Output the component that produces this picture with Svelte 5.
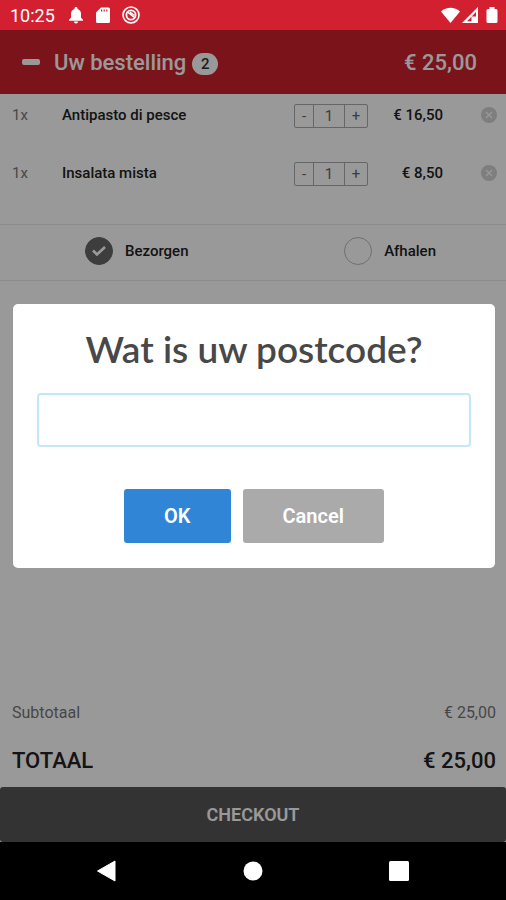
<script>
  let items = $state([
    { name: 'Antipasto di pesce', qty: 1, price: '€ 16,50' },
    { name: 'Insalata mista', qty: 1, price: '€ 8,50' }
  ]);
  let method = $state('Bezorgen');
  let postcode = $state('');
</script>

<div class="screen">
  <div class="status">
    <span class="clock">10:25</span>
    <svg width="16" height="18" viewBox="0 0 16 18" fill="#fff" aria-hidden="true">
      <path d="M8 1c.9 0 1.500.6 1.500 1.400v.6c2.200.6 3.500 2.400 3.500 4.800v4l2 2v1H1v-1l2-2v-4C3 5.400 4.300 3.600 6.500 3v-.6C6.500 1.600 7.100 1 8 1zM6 15.500h4a2 2 0 0 1-4 0z" />
    </svg>
    <svg width="14" height="18" viewBox="0 0 14 18" fill="#fff" aria-hidden="true">
      <path fill-rule="evenodd" d="M5 1.500h7.500A1.500 1.500 0 0 1 14 3v12.500a1.500 1.500 0 0 1-1.500 1.500h-11A1.500 1.500 0 0 1 0 15.500V6.500zM5 3.500v2h1.200v-2zm2.600 0v2h1.200v-2zm2.600 0v2h1.200v-2z" />
    </svg>
    <svg width="18" height="18" viewBox="0 0 18 18" fill="none" stroke="#fff" aria-hidden="true">
      <circle cx="9" cy="9" r="8" stroke-width="1.600" />
      <circle cx="9" cy="9" r="4.600" stroke-width="1.800" />
      <path d="M5.500 6l7.500 6M8 6.200l4.500 3.300" stroke-width="1.500" />
    </svg>
    <span class="grow"></span>
    <svg width="19" height="18" viewBox="0 0 19 18" fill="#fff" aria-hidden="true">
      <path d="M0 5.500C5.500.6 13.500.6 19 5.500L9.500 17z" />
    </svg>
    <svg width="16" height="18" viewBox="0 0 16 18" fill="#fff" aria-hidden="true">
      <path fill-rule="evenodd" d="M16 1v16H0zM14 6L5 15.200h4.500v-4.700H14z" />
      <path d="M10.800 12.200h3.200v3h-3.200z" />
    </svg>
    <svg class="battery" width="12" height="18" viewBox="0 0 12 18" fill="#fff" aria-hidden="true">
      <path d="M3.500 1h5v2H10a1.500 1.500 0 0 1 1.500 1.500v11A1.500 1.500 0 0 1 10 17H2A1.500 1.500 0 0 1 .5 15.500v-11A1.500 1.500 0 0 1 2 3h1.500z" />
    </svg>
  </div>

  <div class="app">
    <header>
      <button class="collapse" aria-label="Inklappen"><span></span></button>
      <h1>Uw bestelling</h1>
      <span class="count">2</span>
      <span class="grow"></span>
      <strong>€ 25,00</strong>
    </header>

    <ul>
      {#each items as item}
        <li>
          <span class="times">{item.qty}x</span>
          <span class="name">{item.name}</span>
          <div class="stepper">
            <button aria-label="Minder {item.name}">-</button>
            <output>{item.qty}</output>
            <button aria-label="Meer {item.name}">+</button>
          </div>
          <span class="price">{item.price}</span>
          <button class="remove" aria-label="Verwijder {item.name}">
            <svg width="16" height="16" viewBox="0 0 16 16" aria-hidden="true">
              <circle cx="8" cy="8" r="8" fill="#d2d2d2" />
              <path d="M5 5l6 6M11 5l-6 6" stroke="#fff" stroke-width="1.200" />
            </svg>
          </button>
        </li>
      {/each}
    </ul>

    <div class="methods">
      {#each ['Bezorgen', 'Afhalen'] as option}
        <label>
          <span class="radio">
            <input type="radio" name="method" value={option} bind:group={method} />
            {#if method === option}
              <svg width="28" height="28" viewBox="0 0 28 28" fill="none" aria-hidden="true">
                <path d="M8 13.500l4 4 8-7.500" stroke="#fff" stroke-width="2.600" />
              </svg>
            {/if}
          </span>
          {option}
        </label>
      {/each}
    </div>

    <dl>
      <div class="sub"><dt>Subtotaal</dt><dd>€ 25,00</dd></div>
      <div class="total"><dt>TOTAAL</dt><dd>€ 25,00</dd></div>
    </dl>
    <button class="checkout">CHECKOUT</button>

    <div class="overlay">
      <form class="dialog" role="dialog" aria-labelledby="question" onsubmit={(e) => e.preventDefault()}>
        <label id="question" for="postcode">Wat is uw postcode?</label>
        <input id="postcode" type="text" bind:value={postcode} />
        <div class="actions">
          <button class="ok" type="submit">OK</button>
          <button class="cancel" type="button">Cancel</button>
        </div>
      </form>
    </div>
  </div>

  <nav>
    <button aria-label="Terug">
      <svg width="22" height="22" viewBox="0 0 22 22" fill="#fff" aria-hidden="true"><path d="M19 1v20L1.500 11z" stroke="#fff" stroke-linejoin="round" /></svg>
    </button>
    <button aria-label="Start">
      <svg width="22" height="22" viewBox="0 0 22 22" fill="#fff" aria-hidden="true"><circle cx="11" cy="11" r="9.500" /></svg>
    </button>
    <button aria-label="Overzicht">
      <svg width="22" height="22" viewBox="0 0 22 22" fill="#fff" aria-hidden="true"><rect x="1" y="1" width="20" height="20" rx="1.500" /></svg>
    </button>
  </nav>
</div>

<style>
  :global(body) {
    margin: 0;
  }
  .screen {
    min-height: 100vh;
    display: flex;
    flex-direction: column;
    background: #000;
    font-family: Roboto, "Liberation Sans", sans-serif;
  }
  .screen * {
    box-sizing: border-box;
  }
  button {
    font: inherit;
    color: inherit;
    background: none;
    border: 0;
    padding: 0;
    cursor: pointer;
  }
  .grow {
    flex: 1;
  }
  .status {
    height: 30px;
    padding: 0 8px 0 10px;
    display: flex;
    align-items: center;
    background: #d32030;
    color: #fff;
  }
  .status svg + svg {
    margin-left: 12px;
  }
  .status .grow ~ svg + svg {
    margin-left: 2px;
  }
  .status .grow ~ .battery {
    margin-left: 8px;
  }
  .clock {
    font-size: 18px;
    margin-right: 13px;
  }
  .app {
    position: relative;
    flex: 1;
    display: flex;
    flex-direction: column;
    background: #fff;
    color: #222;
  }
  header {
    height: 64px;
    padding: 0 29px 0 22px;
    display: flex;
    align-items: center;
    background: #cd202d;
    color: #fff;
    font-size: 22px;
    font-weight: 500;
  }
  .collapse {
    padding: 8px 0;
    margin-right: 14px;
  }
  .collapse span {
    display: block;
    width: 18px;
    height: 6px;
    border-radius: 2px;
    background: #fff;
  }
  h1 {
    margin: 0;
    font: inherit;
  }
  header strong {
    font-weight: 500;
  }
  .count {
    width: 26px;
    height: 22px;
    margin: 4px 0 0 6px;
    border-radius: 11px;
    background: #fff;
    color: #333;
    font-size: 15px;
    line-height: 22px;
    text-align: center;
  }
  ul {
    list-style: none;
    margin: 0;
    padding: 0 9px 0 12px;
  }
  li {
    height: 58px;
    padding-top: 8px;
    display: flex;
    align-items: flex-start;
    font-size: 15px;
    line-height: 26px;
    font-weight: 500;
  }
  .times {
    width: 50px;
    color: #777;
    font-weight: 400;
  }
  .name {
    flex: 1;
  }
  .stepper {
    margin-top: 2px;
    display: flex;
    border: 1px solid #aaa;
    border-radius: 2px;
    color: #666;
    line-height: 22px;
    text-align: center;
    font-weight: 400;
  }
  .stepper button {
    width: 20px;
  }
  .stepper button:first-child {
    width: 18px;
  }
  .stepper button:last-child {
    width: 22px;
  }
  .stepper output {
    width: 32px;
    border: solid #aaa;
    border-width: 0 1px;
  }
  .price {
    width: 75px;
    text-align: right;
  }
  .remove {
    height: 26px;
    margin-left: 38px;
    display: flex;
    align-items: center;
  }
  .methods {
    margin-top: 14px;
    height: 57px;
    padding: 0 70px 3px 85px;
    display: flex;
    justify-content: space-between;
    border: solid #eaeaea;
    border-width: 1px 0;
    font-size: 15px;
    font-weight: 500;
  }
  .methods label {
    display: flex;
    align-items: center;
    gap: 12px;
  }
  .radio {
    position: relative;
    width: 28px;
    height: 28px;
  }
  .radio input {
    appearance: none;
    display: block;
    width: 28px;
    height: 28px;
    margin: 0;
    border: 1px solid #bbb;
    border-radius: 50%;
  }
  .radio input:checked {
    border-color: #666;
    background: #666;
  }
  .radio svg {
    position: absolute;
    inset: 0;
    pointer-events: none;
  }
  dl {
    margin: auto 0 0;
    padding: 0 10px 11px 12px;
  }
  dl div {
    display: flex;
    justify-content: space-between;
    align-items: center;
  }
  dd {
    margin: 0;
  }
  .sub {
    height: 32px;
    margin-bottom: 16px;
    font-size: 16px;
    color: #777;
  }
  .total {
    height: 32px;
    font-size: 22px;
    font-weight: 500;
  }
  .checkout {
    height: 55px;
    border-radius: 3px;
    background: #555;
    color: #fff;
    font-size: 18px;
    font-weight: 600;
  }
  .overlay {
    position: absolute;
    inset: 0;
    padding: 0 11px 0 13px;
    display: flex;
    align-items: center;
    background: rgba(0, 0, 0, 0.4);
  }
  .dialog {
    flex: 1;
    padding: 23px 24px 25px;
    border-radius: 5px;
    background: #fff;
    text-align: center;
  }
  .dialog label {
    display: block;
    font-family: Lato, sans-serif;
    font-size: 37px;
    font-weight: 600;
    line-height: 44px;
    color: #484848;
  }
  .dialog input {
    display: block;
    width: 100%;
    height: 54px;
    margin-top: 22px;
    padding: 0 12px;
    border: 2px solid #c4e6f5;
    border-radius: 4px;
    font: inherit;
    font-size: 20px;
    outline: none;
  }
  .actions {
    margin-top: 42px;
    display: flex;
    justify-content: center;
    gap: 12px;
  }
  .actions button {
    height: 54px;
    padding: 0 40px;
    border-radius: 3px;
    color: #fff;
    font-size: 20px;
    font-weight: 600;
  }
  .ok {
    background: #3085d6;
  }
  .cancel {
    background: #aaa;
  }
  nav {
    height: 58px;
    padding: 0 34px;
    display: flex;
    background: #000;
  }
  nav button {
    flex: 1;
    display: flex;
    align-items: center;
    justify-content: center;
  }
</style>
